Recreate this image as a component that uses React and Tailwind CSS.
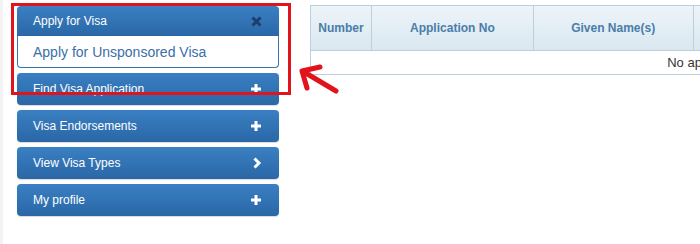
import React from "react";

const PlusIcon = () => (
  <svg width="12" height="12" viewBox="0 0 12 12">
    <path d="M6 1v10M1 6h10" stroke="#fff" strokeWidth="3" />
  </svg>
);

const ChevronIcon = () => (
  <svg width="10" height="12" viewBox="0 0 10 12">
    <path d="M2.5 1.5l4.5 4.5-4.5 4.5" stroke="#fff" strokeWidth="3" fill="none" />
  </svg>
);

const CloseIcon = () => (
  <svg width="11" height="11" viewBox="0 0 11 11">
    <path d="M1.5 1.5l8 8M9.5 1.5l-8 8" stroke="#1d3d6e" strokeWidth="3" />
  </svg>
);

const menuItems = [
  { label: "Find Visa Application", icon: <PlusIcon /> },
  { label: "Visa Endorsements", icon: <PlusIcon /> },
  { label: "View Visa Types", icon: <ChevronIcon /> },
  { label: "My profile", icon: <PlusIcon /> },
];

const columns = [
  { label: "Number", width: "w-[61px]" },
  { label: "Application No", width: "w-[162px]" },
  { label: "Given Name(s)", width: "w-[160px]" },
  { label: "Family Name", width: "w-[160px]" },
  { label: "Status", width: "w-[150px]" },
  { label: "Action", width: "w-[150px]" },
];

const MenuButton = ({ label, icon }) => (
  <div className="flex h-[32px] items-center justify-between rounded-[4px] bg-gradient-to-b from-[#3a80c3] to-[#2a67a6] pl-[16px] pr-[17px] text-[12px] text-white shadow-[0_1px_1px_rgba(0,0,0,0.15)]">
    <span>{label}</span>
    {icon}
  </div>
);

export default function App() {
  return (
    <div
      className="relative flex h-[244px] w-[700px] overflow-hidden bg-white"
      style={{ fontFamily: '"Liberation Sans", Arial, sans-serif' }}
    >
      {/* sidebar */}
      <div className="flex w-[310px] shrink-0 border-l-[3px] border-[#f3f3f3] pl-[14px] pt-[6px]">
        <div className="flex w-[262px] flex-col gap-[5px]">
          <div className="flex flex-col">
            <div className="flex h-[30px] items-center justify-between rounded-t-[4px] bg-gradient-to-b from-[#3a80c3] to-[#2a67a6] pl-[16px] pr-[17px] text-[12px] text-white">
              <span>Apply for Visa</span>
              <CloseIcon />
            </div>
            <div className="flex h-[32px] items-center rounded-b-[4px] border border-t-0 border-[#3a73ad] bg-white pl-[15px] pt-[2px] text-[14px] text-[#3a6fa8]">
              Apply for Unsponsored Visa
            </div>
          </div>
          {menuItems.map((item) => (
            <MenuButton key={item.label} label={item.label} icon={item.icon} />
          ))}
        </div>
      </div>

      {/* results table */}
      <div className="pt-[5px]">
        <table className="w-[843px] border-collapse border border-[#bcd0dc] text-[12px]">
          <thead>
            <tr className="h-[45px] bg-gradient-to-b from-[#edf4f9] to-[#d9e7f0]">
              {columns.map((col) => (
                <th
                  key={col.label}
                  className={`${col.width} border-r border-[#bcd0dc] text-center font-bold text-[#4a7da9]`}
                >
                  {col.label}
                </th>
              ))}
            </tr>
          </thead>
          <tbody>
            <tr className="h-[24px] border-t border-[#bcd0dc]">
              <td colSpan={6} className="text-center text-[13px] text-[#333]">
                No applications found.
              </td>
            </tr>
          </tbody>
        </table>
      </div>

      {/* annotation: red box */}
      <div className="absolute left-[11px] top-[3px] h-[92px] w-[280px] border-[3px] border-[#e0141a]" />

      {/* annotation: arrow */}
      <svg className="absolute left-[296px] top-[60px]" width="46" height="36" viewBox="0 0 46 36">
        <path d="M40 31L8 12" stroke="#e0141a" strokeWidth="5" strokeLinecap="round" />
        <path d="M24 7L6 11L11 28" stroke="#e0141a" strokeWidth="5" fill="none" strokeLinecap="round" strokeLinejoin="round" />
      </svg>
    </div>
  );
}
